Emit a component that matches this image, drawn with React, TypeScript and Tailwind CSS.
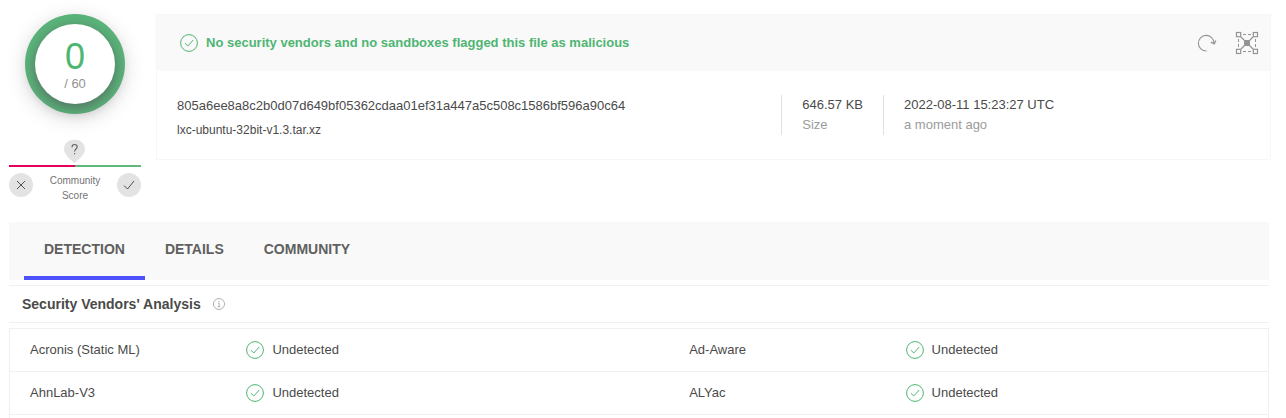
import React from "react";

type Result = { vendor: string; verdict: string };

const rows: [Result, Result][] = [
  [
    { vendor: "Acronis (Static ML)", verdict: "Undetected" },
    { vendor: "Ad-Aware", verdict: "Undetected" },
  ],
  [
    { vendor: "AhnLab-V3", verdict: "Undetected" },
    { vendor: "ALYac", verdict: "Undetected" },
  ],
];

const tabs = ["DETECTION", "DETAILS", "COMMUNITY"];

function CheckCircle() {
  return (
    <svg className="size-[18px] shrink-0 text-[#4fb573]" viewBox="0 0 18 18" fill="none" stroke="currentColor" aria-hidden="true">
      <circle cx="9" cy="9" r="8.4" />
      <path d="M4.9 9.2 7.8 12 13.2 6" />
    </svg>
  );
}

function ReanalyzeIcon() {
  return (
    <svg className="size-5" viewBox="0 0 20 20" fill="none" stroke="currentColor" aria-hidden="true">
      <path d="M9.5 18A7.800 7.800 0 1 1 17 10" strokeWidth="1.100" />
      <path d="M13.800 9.200 17.200 10.800 18.800 7.500" strokeWidth="1.300" />
    </svg>
  );
}

function GraphIcon() {
  return (
    <svg className="size-6" viewBox="0 0 24 24" fill="none" stroke="currentColor" strokeWidth="1.200" aria-hidden="true">
      <rect x="1.500" y="1.500" width="4.200" height="4.200" />
      <rect x="18.300" y="1.500" width="4.200" height="4.200" />
      <rect x="1.500" y="18.300" width="4.200" height="4.200" />
      <rect x="18.300" y="18.300" width="4.200" height="4.200" />
      <path d="M8 3.500h3M13 3.500h3M8 20.500h3M13 20.500h3M3.500 8v3M3.500 13v3M20.500 8v3M20.500 13v3" strokeWidth="1" />
      <path d="m6 6 12 12M18 6 6 18" />
      <rect x="9" y="9" width="6" height="6" fill="currentColor" stroke="none" />
    </svg>
  );
}

function InfoIcon() {
  return (
    <svg className="size-3" viewBox="0 0 12 12" fill="none" stroke="currentColor" aria-hidden="true">
      <circle cx="6" cy="6" r="5.5" strokeWidth="0.8" />
      <path d="M5 5.2h1.1V8.6M4.8 8.7h2.4" strokeWidth="0.8" />
      <path d="M5.5 3.4h1" strokeWidth="1" />
    </svg>
  );
}

function ScorePanel() {
  return (
    <aside className="flex w-[132px] shrink-0 flex-col items-center">
      <div className="flex size-[100px] items-center justify-center rounded-full bg-[#5ab57a] shadow-[0_4px_20px_rgba(0,0,0,0.15)]">
        <div className="flex size-20 flex-col items-center justify-center rounded-full bg-white pt-[2px] shadow-[0_4px_14px_rgba(80,60,80,0.6)]">
          <span className="text-[36px] leading-9 text-[#4fb573]">0</span>
          <span className="mt-px text-[13px] leading-4 text-[#929292]">/ 60</span>
        </div>
      </div>
      <svg className="mt-[25px] h-[26px] w-[22px]" viewBox="0 0 22 26" fill="none" aria-hidden="true">
        <path d="M10.5 24.5C8 21.5 0 16 0 10.5 0 4 4.8.8 10.5.8S21 4 21 10.5c0 5.500-8 11-10.5 14z" fill="#e3e3e3" />
        <path d="M8 8.200c0-1.700 1.100-2.700 2.600-2.700 1.600 0 2.600.9 2.600 2.300 0 2.200-2.600 2.200-2.600 4.700M10.600 14v1.300" stroke="#606060" strokeWidth="1.100" />
      </svg>
      <div className="flex h-[2px] w-full">
        <div className="flex-1 bg-[#e4005c]" />
        <div className="flex-1 bg-[#5fb87c]" />
      </div>
      <div className="mt-[6px] flex w-full items-start justify-between">
        <button type="button" aria-label="Vote malicious" className="flex size-6 items-center justify-center rounded-full bg-[#e3e3e3] text-[#505050]">
          <svg className="size-3" viewBox="0 0 12 12" fill="none" stroke="currentColor" aria-hidden="true">
            <path d="m2 2 8 8M10 2l-8 8" />
          </svg>
        </button>
        <p className="text-center text-[10px] leading-[15px] text-[#737373]">
          Community
          <br />
          Score
        </p>
        <button type="button" aria-label="Vote harmless" className="flex size-6 items-center justify-center rounded-full bg-[#e3e3e3] text-[#505050]">
          <svg className="size-3" viewBox="0 0 12 12" fill="none" stroke="currentColor" aria-hidden="true">
            <path d="M1 6.500 4.500 10 11 2" />
          </svg>
        </button>
      </div>
    </aside>
  );
}

function FileCard() {
  return (
    <section className="min-w-0 flex-1 self-start border border-[#f7f7f7]">
      <header className="flex h-14 items-center gap-2 bg-[#f9f9f9] pr-[11px] pl-[23px]">
        <CheckCircle />
        <h1 className="flex-1 text-[13px] font-bold text-[#4fb573]">
          No security vendors and no sandboxes flagged this file as malicious
        </h1>
        <div className="flex items-center gap-[18px] text-[#949494]">
          <button type="button" aria-label="Reanalyze file">
            <ReanalyzeIcon />
          </button>
          <button type="button" aria-label="Open in graph">
            <GraphIcon />
          </button>
        </div>
      </header>
      <div className="flex items-start pt-6 pb-5 pl-5 text-[13px] leading-5">
        <div className="min-w-0 flex-1">
          <p className="leading-[22px]">805a6ee8a8c2b0d07d649bf05362cdaa01ef31a447a5c508c1586bf596a90c64</p>
          <p className="mt-1 text-[12px] leading-[18px]">lxc-ubuntu-32bit-v1.3.tar.xz</p>
        </div>
        <div className="border-l border-[#e0e0e0] px-5">
          <p>646.57 KB</p>
          <p className="text-[#9b9b9b]">Size</p>
        </div>
        <div className="w-[387px] border-l border-[#e0e0e0] px-5">
          <p>2022-08-11 15:23:27 UTC</p>
          <p className="text-[#9b9b9b]">a moment ago</p>
        </div>
      </div>
    </section>
  );
}

export default function App() {
  return (
    <main className="bg-white pl-[9px] font-['Liberation_Sans',Arial,sans-serif] text-[#4a4a4a]">
      <div className="flex gap-[15px] pt-[14px] pr-[15px] pb-[19px]">
        <ScorePanel />
        <FileCard />
      </div>

      <div className="mr-[17px]">
        <nav role="tablist" aria-label="Report sections" className="flex h-[58px] bg-[#f9f9f9] pl-[15px]">
          {tabs.map((tab, i) => (
            <button
              key={tab}
              type="button"
              role="tab"
              aria-selected={i === 0}
              className={
                i === 0
                  ? "border-b-4 border-[#4d52fb] px-5 text-[14px] font-bold text-[#606060]"
                  : "border-b-4 border-transparent px-5 text-[14px] font-bold text-[#606060]"
              }
            >
              {tab}
            </button>
          ))}
        </nav>

        <div className="mt-[5px] flex h-[38px] items-center gap-3 border-y border-[#f0f0f0] pl-[13px]">
          <h2 className="text-[14px] font-bold">Security Vendors' Analysis</h2>
          <button type="button" aria-label="About this analysis" className="text-[#9b9b9b]">
            <InfoIcon />
          </button>
        </div>

        <div className="mt-[5px] border-x border-t border-[#f0f0f0] pb-[3px]">
          <table className="w-full table-fixed border-separate border-spacing-0 text-left text-[13px]">
            <colgroup>
              <col className="w-[17.2%]" />
              <col className="w-[35.2%]" />
              <col className="w-[17.2%]" />
              <col />
            </colgroup>
            <tbody>
              {rows.map((pair) => (
                <tr key={pair[0].vendor} className="h-[43px]">
                  {pair.map((r) => (
                    <React.Fragment key={r.vendor}>
                      <th scope="row" className="border-b border-[#f0f0f0] px-5 font-normal">
                        {r.vendor}
                      </th>
                      <td className="border-b border-[#f0f0f0] px-5">
                        <span className="flex items-center gap-2">
                          <CheckCircle />
                          {r.verdict}
                        </span>
                      </td>
                    </React.Fragment>
                  ))}
                </tr>
              ))}
            </tbody>
          </table>
        </div>
      </div>
    </main>
  );
}
